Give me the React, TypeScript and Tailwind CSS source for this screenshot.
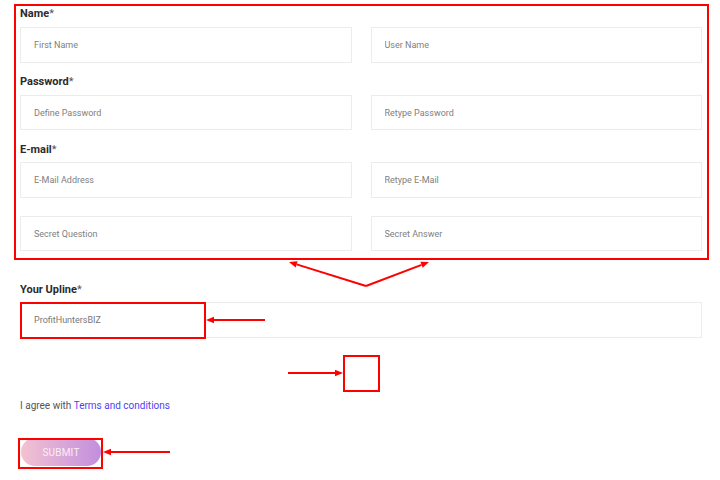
import React from "react";

const field =
  "w-full border border-[#ececec] bg-white px-[13px] text-[9px] text-[#777] placeholder:text-[#808080] outline-none";

function Label({ text, className = "" }: { text: string; className?: string }) {
  return (
    <div className={`h-[14px] text-[11px] leading-[14px] font-bold text-[#2b2b2b] ${className}`}>
      {text}
      <span className="font-normal text-[#555]">*</span>
    </div>
  );
}

function Arrow({ x1, y1, x2, y2 }: { x1: number; y1: number; x2: number; y2: number }) {
  // line ends at (x2,y2) with a small filled head there
  const a = Math.atan2(y2 - y1, x2 - x1);
  const len = 8;
  const w = 3.2;
  const bx = x2 - len * Math.cos(a);
  const by = y2 - len * Math.sin(a);
  const px = -Math.sin(a) * w;
  const py = Math.cos(a) * w;
  return (
    <g>
      <line x1={x1} y1={y1} x2={bx} y2={by} stroke="#ff0000" strokeWidth={2} />
      <polygon points={`${x2},${y2} ${bx + px},${by + py} ${bx - px},${by - py}`} fill="#ff0000" />
    </g>
  );
}

export default function App() {
  return (
    <div className="relative h-[480px] w-[720px] overflow-hidden bg-white font-['Roboto',sans-serif]">
      <form className="w-[702px] pl-[20px] pt-[7px]">
        <Label text="Name" className="mb-[6px]" />
        <div className="grid grid-cols-2 gap-x-[19px]">
          <input className={`${field} h-[36px]`} placeholder="First Name" />
          <input className={`${field} h-[36px]`} placeholder="User Name" />
        </div>

        <Label text="Password" className="mt-[12px] mb-[6px]" />
        <div className="grid grid-cols-2 gap-x-[19px]">
          <input className={`${field} h-[35px]`} placeholder="Define Password" />
          <input className={`${field} h-[35px]`} placeholder="Retype Password" />
        </div>

        <Label text="E-mail" className="mt-[13px] mb-[5px]" />
        <div className="grid grid-cols-2 gap-x-[19px]">
          <input className={`${field} h-[36px]`} placeholder="E-Mail Address" />
          <input className={`${field} h-[36px]`} placeholder="Retype E-Mail" />
        </div>
        <div className="mt-[18px] grid grid-cols-2 gap-x-[19px]">
          <input className={`${field} h-[35px]`} placeholder="Secret Question" />
          <input className={`${field} h-[35px]`} placeholder="Secret Answer" />
        </div>

        <Label text="Your Upline" className="mt-[32px] mb-[5px]" />
        <input className={`${field} h-[36px]`} defaultValue="ProfitHuntersBIZ" readOnly />

        {/* captcha slot, empty in the capture */}
        <div className="h-[61px]" />

        <p className="h-[14px] text-[10px] leading-[14px] text-[#555]">
          I agree with <a className="text-[#4f3ff0]">Terms and conditions</a>
        </p>

        <button
          type="button"
          className="mt-[25px] ml-[1px] h-[28px] w-[80px] rounded-full bg-gradient-to-r from-[#f4c2d0] to-[#c28edd] text-[10px] tracking-[0.2px] text-[#fbeef4]"
        >
          SUBMIT
        </button>
      </form>

      {/* annotation layer */}
      <svg className="pointer-events-none absolute inset-0" width={720} height={480}>
        <rect x={15} y={5} width={693} height={254} fill="none" stroke="#ff0000" strokeWidth={2} />
        <Arrow x1={366} y1={286} x2={289} y2={262} />
        <Arrow x1={366} y1={286} x2={429} y2={262} />
        <rect x={21} y={303} width={184} height={35} fill="none" stroke="#ff0000" strokeWidth={2} />
        <Arrow x1={265} y1={320} x2={206} y2={320} />
        <rect x={344} y={356} width={35} height={35} fill="none" stroke="#ff0000" strokeWidth={2} />
        <Arrow x1={288} y1={373} x2={343} y2={373} />
        <rect x={19} y={439} width={83} height={29} fill="none" stroke="#ff0000" strokeWidth={2} />
        <Arrow x1={170} y1={452} x2={103} y2={452} />
      </svg>
    </div>
  );
}
